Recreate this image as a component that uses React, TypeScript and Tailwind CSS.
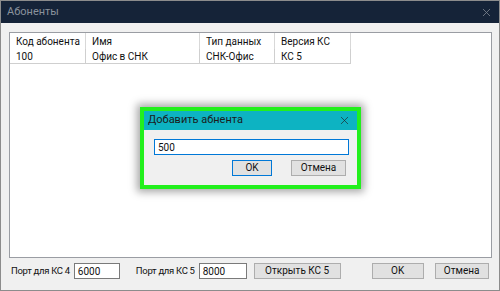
import { X } from 'lucide-react';

const columns = [
  { title: 'Код абонента', w: 'w-[76px]' },
  { title: 'Имя', w: 'w-[114px]' },
  { title: 'Тип данных', w: 'w-[75px]' },
  { title: 'Версия КС', w: 'w-[76px]' },
];

const row = ['100', 'Офис в СНК', 'СНК-Офис', 'КС 5'];

function WinButton({ label, w, active }: { label: string; w: string; active?: boolean }) {
  return (
    <button
      className={`${w} h-[16px] shrink-0 flex items-center justify-center whitespace-nowrap text-[10px] leading-none text-[#111] bg-[#e1e1e1] border ${
        active ? 'border-[#0078d7]' : 'border-[#adadad]'
      }`}
    >
      {label}
    </button>
  );
}

export default function App() {
  return (
    <div
      className="relative w-[500px] h-[291px] overflow-hidden bg-[#f0f0f0] border border-[#8c8c8c] flex flex-col whitespace-nowrap"
      style={{ fontFamily: 'Roboto, "Noto Sans", sans-serif' }}
    >
      {/* Title bar */}
      <div className="h-[22px] shrink-0 bg-[#152338] flex items-center justify-between pl-[6px] pr-[6px]">
        <span className="text-[11px] text-[#8a929c]">Абоненты</span>
        <X className="w-[13px] h-[13px] text-[#7d8590]" strokeWidth={1.5} />
      </div>

      {/* List */}
      <div className="ml-[8px] mr-[7px] mt-[9px] h-[226px] shrink-0 bg-white border border-[#9a9da3]">
        <div className="flex">
          {columns.map(c => (
            <div
              key={c.title}
              className={`${c.w} h-[16px] shrink-0 flex items-center pl-[6px] text-[10px] text-[#111] border-r border-[#d8d8d8]`}
            >
              {c.title}
            </div>
          ))}
        </div>
        <div className="flex">
          {row.map((v, i) => (
            <div
              key={v}
              className={`${columns[i].w} h-[15px] shrink-0 flex items-center pl-[6px] text-[10px] text-[#111] border-r border-b border-[#cfcfcf]`}
            >
              {v}
            </div>
          ))}
        </div>
      </div>

      {/* Bottom bar */}
      <div className="flex items-center mt-[5px] pl-[10px] h-[16px] text-[10px] text-[#111]">
        <span className="shrink-0 text-[9.5px] tracking-[-0.3px]">Порт для КС 4</span>
        <div className="ml-[4px] w-[46px] h-[16px] shrink-0 bg-white border border-[#7a7a7a] flex items-center pl-[3px]">6000</div>
        <span className="ml-[16px] shrink-0 text-[9.5px] tracking-[-0.3px]">Порт для КС 5</span>
        <div className="ml-[4px] w-[48px] h-[16px] shrink-0 bg-white border border-[#7a7a7a] flex items-center pl-[3px]">8000</div>
        <div className="ml-[7px]">
          <WinButton label="Открыть КС 5" w="w-[87px]" />
        </div>
        <div className="ml-[31px]">
          <WinButton label="OK" w="w-[52px]" />
        </div>
        <div className="ml-[11px]">
          <WinButton label="Отмена" w="w-[54px]" />
        </div>
      </div>

      {/* Modal dialog */}
      <div className="absolute left-[139px] top-[106px] w-[221px] h-[82px] border-[4px] border-[#22f01c] bg-[#f0f0f0] shadow-[0_0_8px_3px_rgba(0,0,0,0.35)] flex flex-col">
        <div className="h-[19px] shrink-0 bg-[#0db3c2] flex items-center justify-between pl-[4px] pr-[6px]">
          <span className="text-[11px] text-[#1b1b1b]">Добавить абнента</span>
          <X className="w-[13px] h-[13px] text-[#1e2a2c]" strokeWidth={1.25} />
        </div>
        <div className="flex flex-col px-[10px] pt-[9px]">
          <div className="w-[195px] h-[16px] bg-white border border-[#0078d7] flex items-center pl-[3px] text-[10px] text-[#111]">
            500
          </div>
          <div className="flex justify-end gap-[19px] mt-[5px] pr-px">
            <WinButton label="OK" w="w-[40px]" active />
            <WinButton label="Отмена" w="w-[55px]" />
          </div>
        </div>
      </div>
    </div>
  );
}
